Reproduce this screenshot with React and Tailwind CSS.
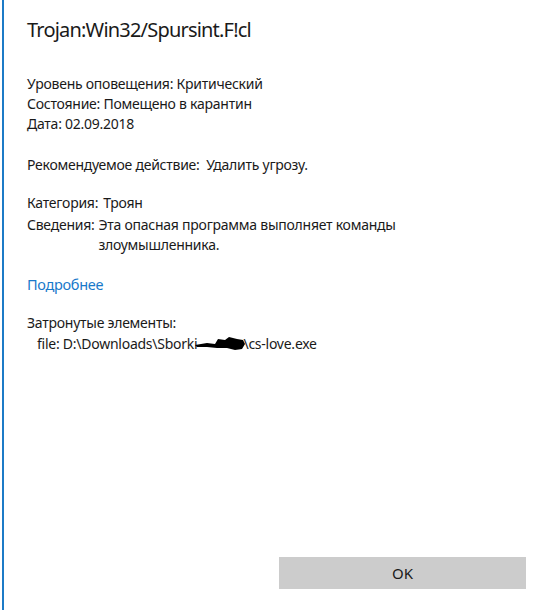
export default function App() {
  return (
    <div
      className="w-[546px] h-[610px] bg-white text-[#1a1a1a] flex"
      style={{ fontFamily: '"Noto Sans", "Open Sans", sans-serif' }}
    >
      <div className="w-[2px] ml-[2px] bg-[#1c7bc7] h-full" />
      <div className="flex-1 flex flex-col pl-[23px] pr-[20px]">
        <div className="text-[20px] leading-[26px] mt-[17px] tracking-[-0.8px]">Trojan:Win32/Spursint.F!cl</div>
        <div className="text-[14px] leading-[20px] mt-[31px] tracking-[-0.25px]">
          <div>Уровень оповещения: Критический</div>
          <div>Состояние: Помещено в карантин</div>
          <div>Дата: 02.09.2018</div>
        </div>
        <div className="text-[14px] leading-[20px] mt-[21px] tracking-[-0.25px]">Рекомендуемое действие:&nbsp; Удалить угрозу.</div>
        <div className="text-[14px] leading-[20px] mt-[18px] tracking-[-0.25px]">
          <div className="flex gap-[5px]">
            <span>Категория:</span>
            <span>Троян</span>
          </div>
          <div className="flex gap-[4px] mt-[2px]">
            <span>Сведения:</span>
            <span className="w-[320px]">Эта опасная программа выполняет команды злоумышленника.</span>
          </div>
        </div>
        <div className="text-[14.5px] leading-[20px] mt-[19px] text-[#1979ca] tracking-[-0.3px]">Подробнее</div>
        <div className="text-[14px] leading-[20px] mt-[19px] tracking-[-0.25px]">
          <div>Затронутые элементы:</div>
          <div className="pl-[10px] mt-[1px] flex items-center">
            <span>file: D:\Downloads\Sborki</span>
            <svg width="50" height="16" viewBox="0 0 50 16" className="-mx-[2px]">
              <path d="M0 9 L12 7 L20 8 L23 3 L30 4 L34 1 L42 3 L48 4 L50 8 L47 13 L40 14 L32 12 L22 12 L12 11 L2 11 Z" fill="#000" />
            </svg>
            <span>\cs-love.exe</span>
          </div>
        </div>
        <div className="flex-1" />
        <div className="flex justify-end mb-[21px]">
          <button className="w-[247px] h-[32px] bg-[#cccccc] text-[15px] text-[#1a1a1a]">OK</button>
        </div>
      </div>
    </div>
  );
}
